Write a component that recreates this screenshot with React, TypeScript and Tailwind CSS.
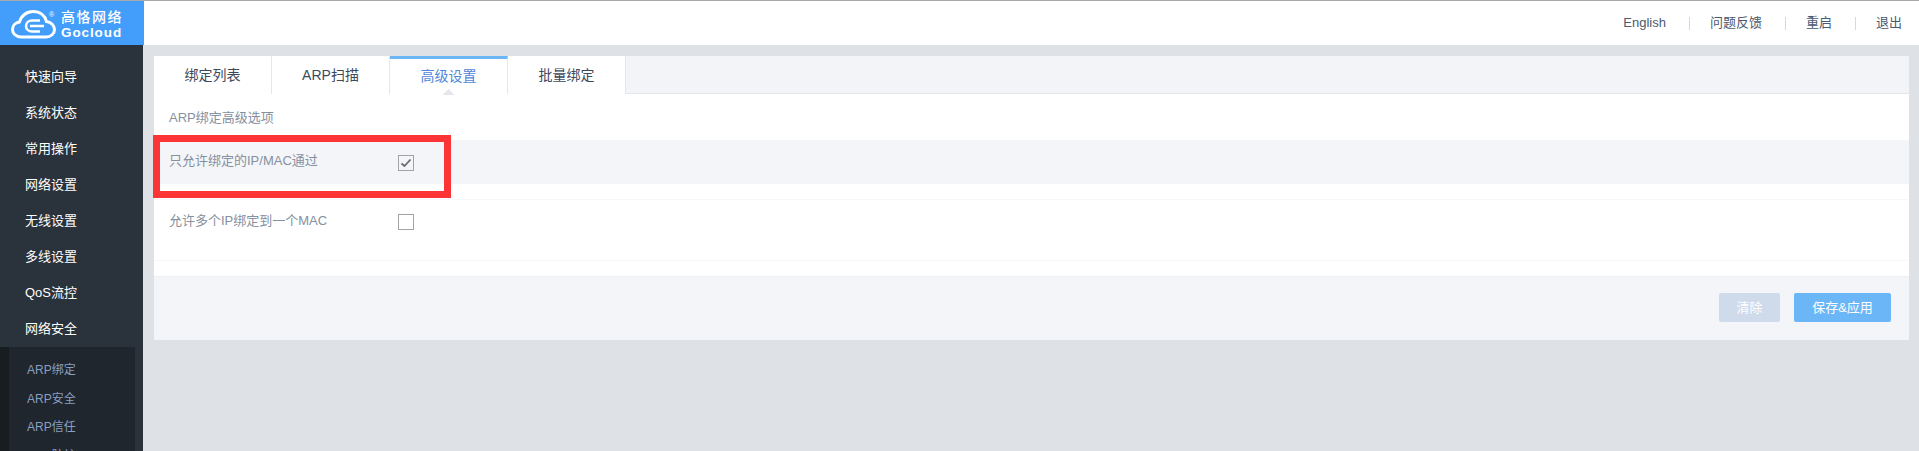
import React from 'react'

const font = { fontFamily: '"Liberation Sans", "Noto Sans CJK SC", sans-serif' }

const navItems = ['快速向导', '系统状态', '常用操作', '网络设置', '无线设置', '多线设置', 'QoS流控', '网络安全']
const subItems = ['ARP绑定', 'ARP安全', 'ARP信任', 'ARP防护']
const tabs = ['绑定列表', 'ARP扫描', '高级设置', '批量绑定']

const Logo = () => (
  <div className="relative w-[144px] h-[44px] shrink-0 bg-[#429efa] flex items-center pl-[11px] text-white">
    <svg width="45" height="29" viewBox="0 0 45 29" fill="none" stroke="white" strokeWidth="3" className="shrink-0 mt-[2px]">
      <path d="M10 27 C4.500 27 1.500 23 1.500 19.500 C1.500 15.500 4.500 12.500 8.500 12 C10 6 15.500 1.500 22 1.500 C29 1.500 34 5.500 35.500 11.500 C40 12 43.500 15.500 43.500 19.500 C43.500 23.500 40 27 35 27 Z" />
      <path d="M29 10.500 L21 10.500 C17.500 10.500 15 13 15 16 C15 19 17.500 21.500 21 21.500 L29 21.500" strokeWidth="2.500" />
      <path d="M19 16 L33 16" strokeWidth="2.500" />
    </svg>
    <span className="absolute left-[49px] top-[10px] text-[7px] leading-none">®</span>
    <div className="ml-[5px] mt-[2px] flex flex-col items-start">
      <span className="text-[14px] leading-[16px] font-medium tracking-[1.500px] whitespace-nowrap">高恪网络</span>
      <span className="text-[13.500px] leading-[15px] font-bold tracking-[0.900px]">Gocloud</span>
    </div>
  </div>
)

const Checkbox = ({ checked }: { checked?: boolean }) => (
  <div className={checked ? 'w-4 h-4 border border-[#a3a3a3] flex items-center justify-center' : 'w-4 h-4 border border-[#a3a3a3] bg-white'}>
    {checked && (
      <svg width="12" height="10" viewBox="0 0 12 10" fill="none" stroke="#6b6b6b" strokeWidth="1.800">
        <path d="M1.500 5.500 L4.500 8 L10.500 1.500" />
      </svg>
    )}
  </div>
)

export default function App() {
  return (
    <div className="w-[1919px] h-[451px] overflow-hidden bg-[#dee1e6] flex flex-col border-t border-[#aaaaaa]" style={font}>
      <header className="h-[44px] shrink-0 bg-white flex items-center">
        <Logo />
        <div className="ml-auto flex items-center pr-[17px] text-[13px] text-[#4a5a70]">
          <span>English</span>
          <span className="w-px h-[13px] bg-[#cfdbe8] ml-[23px] mr-[20px]" />
          <span>问题反馈</span>
          <span className="w-px h-[13px] bg-[#cfdbe8] ml-[23px] mr-[20px]" />
          <span>重启</span>
          <span className="w-px h-[13px] bg-[#cfdbe8] ml-[23px] mr-[20px]" />
          <span>退出</span>
        </div>
      </header>

      <div className="flex-1 flex min-h-0">
        <aside className="w-[143px] shrink-0 bg-[#2a323c] overflow-hidden">
          <nav className="pt-[14px]">
            {navItems.map((n) => (
              <div key={n} className="h-[36px] flex items-center pl-[25px] text-[13px] text-white">{n}</div>
            ))}
          </nav>
          <div className="bg-[#181d22] mr-[8px] pl-[9px] h-[200px]">
            <div className="bg-[#1f262e] h-full pt-[9px]">
              {subItems.map((s) => (
                <div key={s} className="h-[28.500px] flex items-center pl-[18px] text-[12px] text-[#8a9fc0]">{s}</div>
              ))}
            </div>
          </div>
        </aside>

        <main className="flex-1 pt-[11px] pl-[11px] pr-[10px]">
          <div className="relative h-[284px] bg-white flex flex-col">
            <div className="h-[38px] flex bg-[#f3f4f7] border-b border-[#e4e6ec]">
              {tabs.map((t, i) => (
                <div
                  key={t}
                  className={
                    i === 2
                      ? 'relative w-[118px] h-[38px] bg-white border-r border-[#e4e6ec] border-t-[3px] border-t-[#6cb6f5] flex items-center justify-center text-[14px] text-[#4f86d9]'
                      : 'w-[118px] h-[38px] bg-white border-r border-[#e4e6ec] flex items-center justify-center text-[14px] text-[#3d4a5c]'
                  }
                >
                  {t}
                  {i === 2 && <span className="absolute -bottom-px left-1/2 -ml-[6px] w-[12px] h-[6px] bg-[#e4e6ec] [clip-path:polygon(50%_0,100%_100%,0_100%)]" />}
                </div>
              ))}
            </div>

            <div className="h-[46px] flex items-center pl-[15px] pt-[2px] text-[13px] text-[#8590a0]">ARP绑定高级选项</div>

            <div className="h-[44px] bg-[#f4f5f8] flex items-start pl-[15px] text-[13px] text-[#8590a0]">
              <span className="w-[229px] mt-[13px] leading-[16px]">只允许绑定的IP/MAC通过</span>
              <div className="mt-[15px]"><Checkbox checked /></div>
            </div>

            <div className="h-[15px]" />

            <div className="h-[62px] border-t border-b border-[#f7f8fa] flex items-start pl-[15px] text-[13px] text-[#8590a0]">
              <span className="w-[229px] mt-[13px] leading-[16px]">允许多个IP绑定到一个MAC</span>
              <div className="mt-[14px]"><Checkbox /></div>
            </div>

            <div className="h-[15px]" />

            <div className="flex-1 bg-[#f4f5f8] border-t border-[#eeeff3] flex items-start justify-end pr-[18px] pt-[16px] text-[13px] text-white">
              <button className="w-[61px] h-[29px] rounded-[2px] bg-[#cfdaeb] mr-[14px]">清除</button>
              <button className="w-[97px] h-[29px] rounded-[2px] bg-[#6bb6f6]">保存&amp;应用</button>
            </div>

            <div className="absolute left-[-1px] top-[79px] w-[298px] h-[63px] border-[7px] border-[#fb3535]" />
          </div>
        </main>
      </div>
    </div>
  )
}
